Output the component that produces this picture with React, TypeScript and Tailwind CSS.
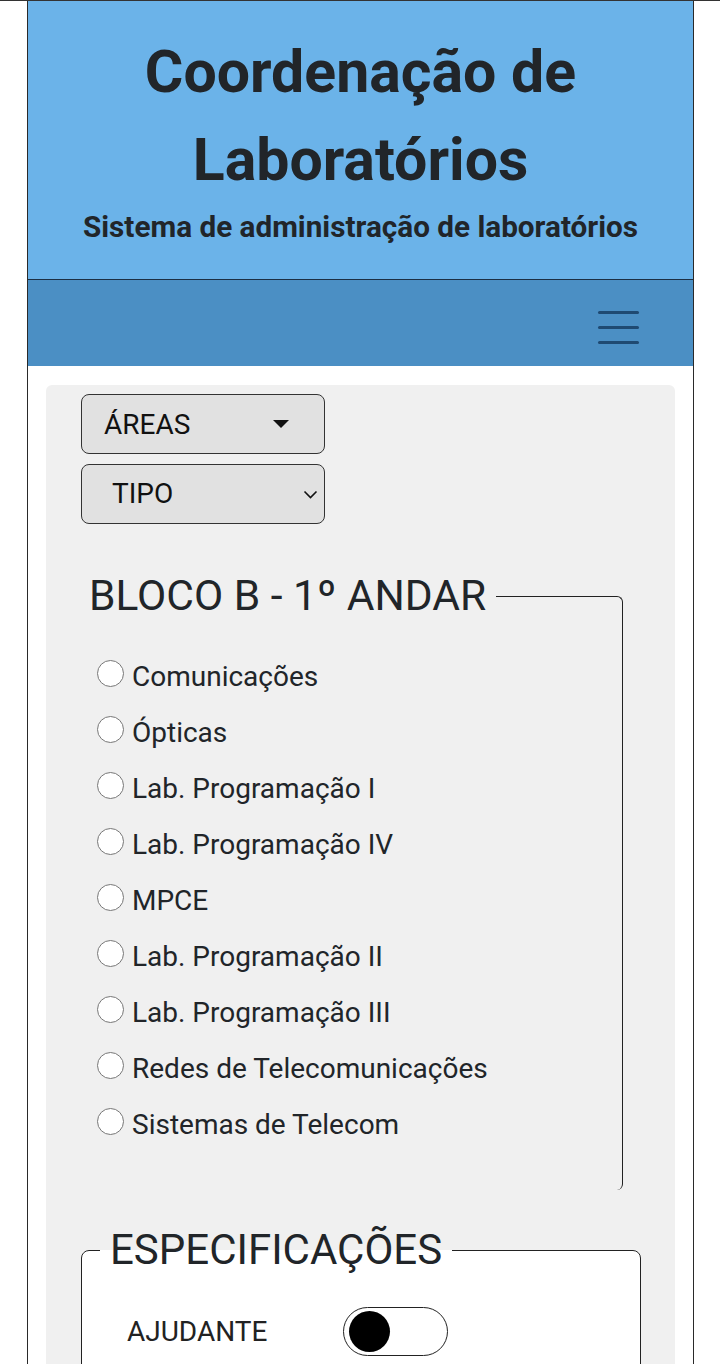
import React from "react";

const labs = [
  "Comunicações",
  "Ópticas",
  "Lab. Programação I",
  "Lab. Programação IV",
  "MPCE",
  "Lab. Programação II",
  "Lab. Programação III",
  "Redes de Telecomunicações",
  "Sistemas de Telecom",
];

export default function App() {
  return (
    <div
      className="min-h-[1364px] bg-white border-t border-[#333]"
      style={{ fontFamily: "Roboto, 'Noto Sans', sans-serif" }}
    >
      <div className="ml-[27px] w-[667px] min-h-[1363px] border-x border-[#2a2a2a] bg-white">
        <header className="bg-[#6bb3e9] h-[279px] border-b border-[#1c2f44] text-[#212529] text-center flex flex-col items-center">
          <h1 className="text-[59px] font-bold leading-[88px] mt-[27px]">
            Coordenação de
            <br />
            Laboratórios
          </h1>
          <p className="text-[29.7px] font-bold leading-[36px] mt-[5px]">
            Sistema de administração de laboratórios
          </p>
        </header>
        <nav className="bg-[#4b8fc4] h-[86px] flex items-start justify-end pr-[54px] pt-[31px]">
          <div className="flex flex-col gap-[12px]">
            <span className="block w-[41px] h-[3px] rounded-full bg-[#1f4a72]" />
            <span className="block w-[41px] h-[3px] rounded-full bg-[#1f4a72]" />
            <span className="block w-[41px] h-[3px] rounded-full bg-[#1f4a72]" />
          </div>
        </nav>
        <main className="mx-[18px] mt-[19px] bg-[#f0f0f0] rounded-[6px] pt-[9px] pl-[35px] pr-[36px] pb-[40px]">
          <div className="flex flex-col gap-[10px]">
            <div className="w-[244px] h-[60px] rounded-[8px] border border-[#333] bg-[#e1e1e1] flex items-center justify-between pl-[22px] pr-[35px]">
              <span className="text-[28px] leading-[32px] text-[#111] mt-[2px]">ÁREAS</span>
              <svg width="16" height="8" viewBox="0 0 16 8">
                <path d="M0 0 L16 0 L8 8 Z" fill="#111" />
              </svg>
            </div>
            <div className="w-[244px] h-[60px] rounded-[8px] border border-[#333] bg-[#e1e1e1] flex items-center justify-between pl-[30px] pr-[6px]">
              <span className="text-[28px] leading-[32px] text-[#111]">TIPO</span>
              <svg width="15" height="9" viewBox="0 0 15 9">
                <path d="M1.5 1.5 L7.5 7.5 L13.5 1.5" fill="none" stroke="#111" strokeWidth="1.6" />
              </svg>
            </div>
          </div>

          <fieldset className="mt-[48px] ml-[8px] mr-[16px] border-t border-r border-[#222] rounded-tr-[6px] rounded-br-[6px] pb-[55px]">
            <legend className="text-[42.5px] leading-[48px] text-[#212529] pr-[10px]">
              BLOCO B - 1º ANDAR
            </legend>
            <div className="flex flex-col gap-[28px] mt-[39px] pl-[8px]">
              {labs.map((l) => (
                <label key={l} className="flex items-center h-[28px]">
                  <span className="w-[27px] h-[27px] rounded-full border-[1.5px] border-[#777] bg-white mr-[8px] shrink-0" />
                  <span className="text-[28px] text-[#212529] leading-[30px] mt-[7px]">{l}</span>
                </label>
              ))}
            </div>
          </fieldset>

          <fieldset className="mt-[36px] w-[560px] border border-[#222] rounded-[8px] bg-white pl-[18px] pb-[30px]">
            <legend className="text-[42px] leading-[48px] text-[#212529] px-[10px]">
              ESPECIFICAÇÕES
            </legend>
            <div className="flex items-center mt-[33px] pl-[27px]">
              <span className="text-[28px] leading-[32px] text-[#222] w-[216px]">AJUDANTE</span>
              <div className="w-[105px] h-[49px] rounded-full border border-[#222] bg-white flex items-center pl-[5px]">
                <span className="block w-[41px] h-[41px] rounded-full bg-black" />
              </div>
            </div>
          </fieldset>
        </main>
      </div>
    </div>
  );
}
